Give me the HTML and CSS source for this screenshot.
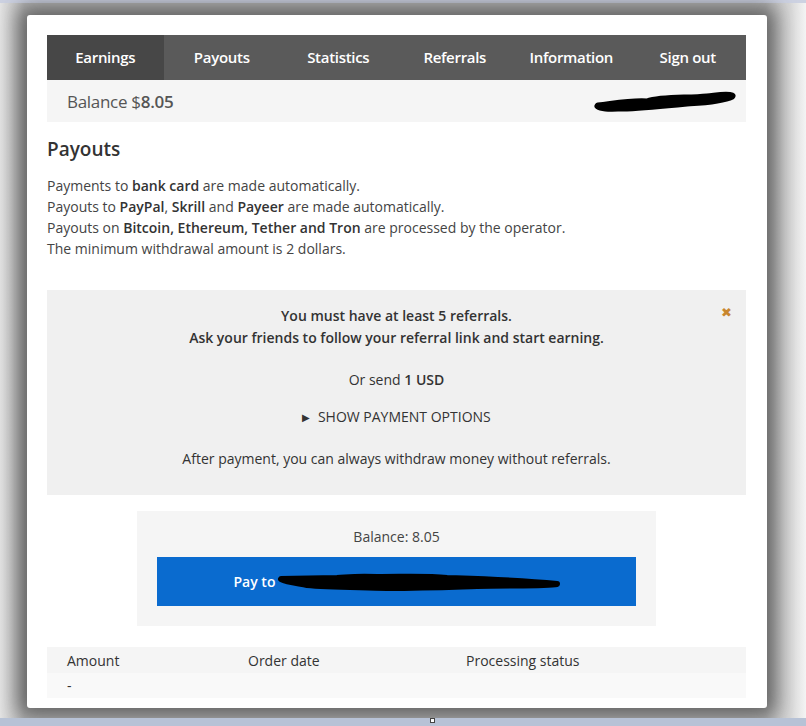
FILE: index.html
```html
<!DOCTYPE html>
<html lang="en">
    <head>
        <meta charset="utf-8" />
        <title>Payouts</title>
        <link rel="stylesheet" href="styles.css">
    </head>
    <body>
        <div class="topstrip"></div>
        <div class="stage">
            <div class="window">
                <div class="nav">
                    <a class="tab active" href="#">Earnings</a>
                    <a class="tab" href="#">Payouts</a>
                    <a class="tab" href="#">Statistics</a>
                    <a class="tab" href="#">Referrals</a>
                    <a class="tab" href="#">Information</a>
                    <a class="tab" href="#">Sign out</a>
                </div>
                <div class="balancebar">
                    <span class="balance">Balance $<b>8.05</b></span>
                    <svg class="scribble" width="146" height="22" viewBox="0 0 146 22">
                        <path d="M6 15 C30 12 40 10 55 11 C70 6 95 8 115 6 C125 5 135 3 140 5 C130 10 110 11 95 12 C75 14 55 16 35 17 C20 17 10 18 6 15 Z" fill="#000" stroke="#000" stroke-width="7" stroke-linejoin="round"/>
                    </svg>
                </div>

                <h2 class="title">Payouts</h2>
                <div class="info">
                    <p>Payments to <b>bank card</b> are made automatically.</p>
                    <p>Payouts to <b>PayPal</b>, <b>Skrill</b> and <b>Payeer</b> are made automatically.</p>
                    <p>Payouts on <b>Bitcoin, Ethereum, Tether and Tron</b> are processed by the operator.</p>
                    <p>The minimum withdrawal amount is 2 dollars.</p>
                </div>

                <div class="alert">
                    <span class="close">&#x2716;</span>
                    <p class="strong">You must have at least 5 referrals.<br>Ask your friends to follow your referral link and start earning.</p>
                    <p class="send">Or send <b>1 USD</b></p>
                    <p class="options"><span class="arrow">&#9654;</span> SHOW PAYMENT OPTIONS</p>
                    <p class="after">After payment, you can always withdraw money without referrals.</p>
                </div>

                <div class="paybox">
                    <p class="paybalance">Balance: 8.05</p>
                    <a class="paybtn" href="#">Pay to <svg class="scribble2" width="292" height="22" viewBox="0 0 292 22">
                        <path d="M4 6 L60 5 C75 4 80 3 100 4 C130 4 150 3 170 5 C200 6 240 7 280 11 C270 13 230 12 200 13 C170 14 150 15 110 15 C80 14 50 14 30 12 C20 10 10 9 4 6 Z" fill="#000" stroke="#000" stroke-width="6" stroke-linejoin="round"/>
                    </svg></a>
                </div>

                <div class="table">
                    <div class="row head">
                        <span>Amount</span>
                        <span>Order date</span>
                        <span>Processing status</span>
                    </div>
                    <div class="row">
                        <span>-</span>
                        <span></span>
                        <span></span>
                    </div>
                </div>
            </div>
        </div>
        <div class="bottomstrip"><span class="handle"></span></div>
    </body>
</html>
```

FILE: styles.css
```css
* {
    margin: 0;
    padding: 0;
    box-sizing: border-box;
}

body {
    width: 806px;
    height: 726px;
    overflow: hidden;
    font-family: "Open Sans", sans-serif;
    font-size: 14px;
    color: #333;
    background: linear-gradient(to right, #e4e4e4 0%, #b9b9b9 3%, #b9b9b9 95%, #d8d8d8 98%, #f4f4f4 100%);
}

.topstrip {
    height: 3px;
    background: #cdd2e2;
}

.stage {
    height: 715px;
    padding: 12px 0 0 27px;
}

.window {
    width: 740px;
    height: 693px;
    background: #fff;
    border-radius: 3px;
    padding: 20px 21px 0 20px;
    box-shadow: 0 0 20px 9px rgba(40, 40, 40, 0.6);
}

a {
    text-decoration: none;
}

.nav {
    display: grid;
    grid-template-columns: repeat(6, 1fr);
    height: 45px;
    background: #5a5a5a;
}

.tab {
    display: flex;
    align-items: center;
    justify-content: center;
    color: #fff;
    font-size: 15px;
    font-weight: 600;
    letter-spacing: -0.3px;
    padding-bottom: 2px;
}

.tab.active {
    background: #474747;
}

.balancebar {
    height: 42px;
    background: #f5f5f5;
    display: flex;
    align-items: center;
    justify-content: space-between;
    padding: 0 8px 0 20px;
}

.balance {
    font-size: 17px;
    color: #555;
    letter-spacing: -0.3px;
}

.balance b {
    font-weight: 600;
}

.scribble {
    margin-top: 2px;
}

.title {
    font-size: 19px;
    font-weight: 600;
    color: #333;
    line-height: 26px;
    margin-top: 14px;
}

.info {
    margin-top: 13px;
    line-height: 21px;
    color: #444;
}

.info b {
    font-weight: 600;
    color: #333;
}

.alert {
    position: relative;
    margin-top: 31px;
    background: #f0f0f0;
    text-align: center;
    line-height: 22px;
    padding: 15px 20px 25px;
    color: #333;
}

.alert .strong {
    font-weight: 600;
}

.alert b {
    font-weight: 600;
}

.send {
    margin-top: 20px;
}

.options {
    margin-top: 15px;
    text-transform: uppercase;
}

.arrow {
    font-size: 10px;
    margin-right: 4px;
    vertical-align: 1px;
}

.after {
    margin-top: 20px;
}

.close {
    position: absolute;
    top: 14px;
    right: 14px;
    color: #c8862e;
    font-size: 13px;
    line-height: 16px;
}

.paybox {
    width: 519px;
    margin: 16px auto 0;
    background: #f5f5f5;
    padding: 15px 20px 20px;
    text-align: center;
}

.paybalance {
    line-height: 22px;
    color: #444;
}

.paybtn {
    display: flex;
    align-items: center;
    justify-content: center;
    margin-top: 9px;
    height: 49px;
    background: #0a6bcf;
    color: #fff;
    font-weight: 600;
    font-size: 14px;
    padding-left: 10px;
}

.scribble2 {
    margin-left: 2px;
    margin-top: 4px;
}

.table {
    margin-top: 21px;
    background: #f9f9f9;
}

.row {
    display: grid;
    grid-template-columns: 181px 218px 1fr;
    padding-left: 20px;
    height: 25px;
    align-items: center;
}

.row.head {
    height: 26px;
    background: #f5f5f5;
    color: #333;
}

.bottomstrip {
    position: relative;
    height: 8px;
    background: #b7c2d6;
}

.handle {
    position: absolute;
    left: 430px;
    top: 0;
    width: 5px;
    height: 5px;
    border: 1px solid #444;
    background: #fff;
}
```
